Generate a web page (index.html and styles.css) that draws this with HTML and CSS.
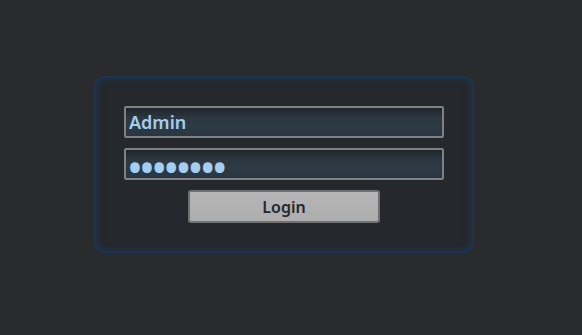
FILE: index.html
```html
<!DOCTYPE html>
<html lang="en">
<head>
<meta charset="utf-8">
<title>Login</title>
<link rel="stylesheet" href="styles.css">
</head>
<body>
<form class="panel" onsubmit="return false">
  <input class="field" type="text" value="Admin" aria-label="Username">
  <input class="field field-pass" type="password" value="password" aria-label="Password">
  <button class="btn" type="submit">Login</button>
</form>
</body>
</html>
```

FILE: styles.css
```css
html, body {
  margin: 0;
  height: 100%;
}
body {
  background: #2a2b2d;
  padding: 76px 0 0 94px;
  box-sizing: border-box;
  font-family: "Noto Sans", "Open Sans", sans-serif;
}
.panel {
  width: 380px;
  box-sizing: border-box;
  padding: 30px 30px 30px;
  display: flex;
  flex-direction: column;
  align-items: center;
  gap: 10px;
  background: #25282c;
  border-radius: 11px;
  box-shadow: inset 0 0 0 1px #1e3653, inset 0 0 6px 3px #1c3652;
}
.field {
  width: 320px;
  height: 32px;
  box-sizing: border-box;
  margin: 0;
  padding: 0 0 0 3px;
  border: 2px solid #7f8182;
  border-radius: 2px;
  background: linear-gradient(#1f252b 0px, #2b3640 9px, #2d3b45 18px, #2a3641 100%);
  color: #a5cdee;
  font-family: "Noto Sans", sans-serif;
  font-weight: 600;
  font-size: 18px;
  outline: none;
}
.field-pass {
  font-size: 37px;
  letter-spacing: -1.8px;
  padding: 4px 0 0 2px;
  line-height: 24px;
}
.btn {
  width: 192px;
  height: 33px;
  margin: 0;
  box-sizing: border-box;
  border: 2px solid #6f7072;
  border-radius: 3px;
  background: linear-gradient(#b6b6b6, #adadad);
  color: #26282b;
  font-family: "Noto Sans", sans-serif;
  font-weight: 600;
  font-size: 16px;
  padding: 0;
}
```
